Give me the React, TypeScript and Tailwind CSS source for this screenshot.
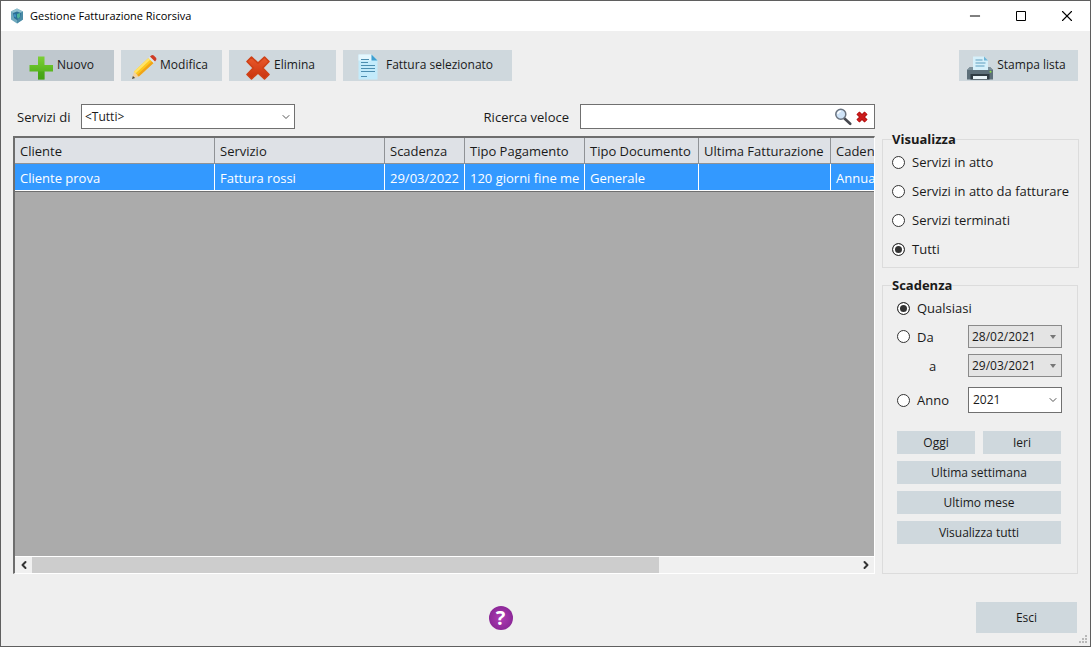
import { useState, type ReactNode } from "react";
import { ChevronDown, ChevronLeft, ChevronRight, Minus, Square, X } from "lucide-react";

const columns = [
  { label: "Cliente", width: "w-[200px]", value: "Cliente prova" },
  { label: "Servizio", width: "w-[170px]", value: "Fattura rossi" },
  { label: "Scadenza", width: "w-[80px]", value: "29/03/2022" },
  { label: "Tipo Pagamento", width: "w-[120px]", value: "120 giorni fine me" },
  { label: "Tipo Documento", width: "w-[114px]", value: "Generale" },
  { label: "Ultima Fatturazione", width: "w-[132px]", value: "" },
  { label: "Cadenza", width: "w-[320px]", value: "Annuale" },
];

const views = ["Servizi in atto", "Servizi in atto da fatturare", "Servizi terminati", "Tutti"];

function AppLogo() {
  return (
    <svg viewBox="0 0 16 16" className="size-4" aria-hidden="true">
      <path d="M8 0.5 14 3.5v8L8 15.5 2 11.5v-8z" fill="#6fa9bd" />
      <path d="M8 0.5 14 3.5 8 7 2 3.5z" fill="#8fc0cf" />
      <path d="M8 7v8.5l6-4v-8z" fill="#4b8ba6" />
      <path d="M4 5l4-1.500 4 1.500-1 5-3 2-3-2z" fill="#2a6f96" />
      <path d="M8 6l3-1v4l-2 2-1-2z" fill="#4fb39a" />
      <path d="M5 6l2 0.500v3l-2-1z" fill="#3f93c4" />
    </svg>
  );
}

function PlusIcon() {
  return (
    <svg viewBox="0 0 24 24" className="size-6" aria-hidden="true">
      <defs>
        <linearGradient id="plus" x1="0" y1="0" x2="0" y2="1">
          <stop offset="0" stopColor="#7ccf35" />
          <stop offset="1" stopColor="#46a814" />
        </linearGradient>
      </defs>
      <path d="M9 0.500h6.500v8.500H24v6.500h-8.500v8H9v-8H0.500V9H9z" fill="url(#plus)" />
      <path d="M9 15.500h6.500v8H9z" fill="#3f9d12" opacity="0.5" />
    </svg>
  );
}

function PencilIcon() {
  return (
    <svg viewBox="0 0 26 26" className="size-[26px]" aria-hidden="true">
      <path d="M1 25l2-7.500 4.800 5z" fill="#f3d2a0" />
      <path d="M1 25l0.900-3 2.200 2z" fill="#444" />
      <path d="M3 17.500L17.500 4l5 5L7.800 22.500z" fill="#fcc81e" />
      <path d="M3 17.500L17.500 4l1.700 1.700L4.700 19.200z" fill="#ffe36a" />
      <path d="M6.200 20.900L20.800 7.300l1.700 1.700L7.800 22.500z" fill="#f0a31a" />
      <path d="M17.500 4l1.500-1.400 5 5L22.500 9z" fill="#dfe5e8" />
      <path d="M19 2.600l1.200-1.100q1.300-1 2.600 0l2.200 2.200q1 1.200 0 2.500L24 7.600z" fill="#cf3a24" />
    </svg>
  );
}

function DeleteIcon() {
  return (
    <svg viewBox="0 0 24 24" className="size-6" aria-hidden="true">
      <defs>
        <linearGradient id="cross" x1="0" y1="0" x2="0" y2="1">
          <stop offset="0" stopColor="#ea5a2c" />
          <stop offset="1" stopColor="#c8320e" />
        </linearGradient>
      </defs>
      <path
        d="M5.500 1 12 7.200 18.500 1 23 5.500 16.800 12 23 18.500 18.500 23 12 16.800 5.500 23 1 18.500 7.200 12 1 5.500z"
        fill="url(#cross)"
        stroke="#cf4015"
        strokeWidth="1.600"
        strokeLinejoin="round"
      />
    </svg>
  );
}

function DocumentIcon() {
  return (
    <svg viewBox="0 0 20 26" className="h-[26px] w-5" aria-hidden="true">
      <path d="M0.500 0.500h13l6 6v19h-19z" fill="#c3ebfb" />
      <path d="M0.500 0.500h13v6H0.500z" fill="#e4f7fe" />
      <path d="M13.500 0.500l6 6h-6z" fill="#3f9fd0" />
      <path d="M3 5.500h8M3 8.500h7M3 11.500h14M3 14.500h14M3 17.500h14M3 22.500h6" stroke="#4c8eb0" strokeWidth="1.200" />
    </svg>
  );
}

function PrinterIcon() {
  return (
    <svg viewBox="0 0 26 24" className="h-6 w-[26px]" aria-hidden="true">
      <path d="M3 11h20l3 3v9.500H0V14z" fill="#5d6f79" />
      <path d="M3 11h20l3 3H0z" fill="#7d909a" />
      <path d="M6 0.500h11l4 4V14H6z" fill="#d6f0fa" />
      <path d="M17 0.500l4 4h-4z" fill="#6fb5d6" />
      <path d="M8.500 4h7M8.500 7h10M8.500 10h9" stroke="#5f9dbd" strokeWidth="1.100" />
      <path d="M3.500 18h19v5.500h-19z" fill="#2f3b42" />
      <path d="M6 20h14v3H6z" fill="#e9f3f7" />
      <circle cx="23.500" cy="15.800" r="1" fill="#8ddb4a" />
    </svg>
  );
}

function SearchIcon() {
  return (
    <svg viewBox="0 0 18 18" className="size-[18px]" aria-hidden="true">
      <path d="M10.500 10.500l5.700 5.300" stroke="#46484f" strokeWidth="2.600" strokeLinecap="round" />
      <circle cx="6.800" cy="6.300" r="5" fill="#cfe3f7" stroke="#69727e" strokeWidth="1.500" />
      <path d="M3.800 6a3 3 0 0 1 3-2.700" stroke="#fff" strokeWidth="1.300" fill="none" />
    </svg>
  );
}

function ClearIcon() {
  return (
    <svg viewBox="0 0 14 14" className="size-3.5" aria-hidden="true">
      <path d="M3 3l8 8M11 3l-8 8" stroke="#a80f0f" strokeWidth="4.500" />
      <path d="M3 3l8 8M11 3l-8 8" stroke="#cc1c1c" strokeWidth="2.800" />
    </svg>
  );
}

function ToolButton({ icon, children, className }: { icon: ReactNode; children: ReactNode; className: string }) {
  return (
    <button type="button" className={`flex h-[31px] items-end justify-center pr-1 pb-px ${className}`}>
      {icon}
      <span className="self-center">{children}</span>
    </button>
  );
}

function SmallButton({ children }: { children: ReactNode }) {
  return (
    <button type="button" className="h-[23px] w-full bg-[#cfd8dd] text-xs">
      {children}
    </button>
  );
}

function Radio({ name, label, checked, onChange }: { name: string; label: string; checked: boolean; onChange: () => void }) {
  return (
    <label className="flex items-center gap-[7px] whitespace-nowrap">
      <input
        type="radio"
        name={name}
        checked={checked}
        onChange={onChange}
        className="size-[13px] shrink-0 appearance-none rounded-full border border-[#333] bg-white checked:bg-[#333] checked:shadow-[inset_0_0_0_2px_white]"
      />
      {label}
    </label>
  );
}

function DateField({ label, value }: { label: string; value: string }) {
  return (
    <div className="flex h-[23px] items-center border border-[#8a8a8a] bg-[#e4e4e4] pl-[3px] pr-1">
      <input type="text" aria-label={label} defaultValue={value} className="w-full min-w-0 bg-transparent text-xs outline-none" />
      <svg viewBox="0 0 8 4" className="h-1 w-2 shrink-0" aria-hidden="true">
        <path d="M1 0h6L4 4z" fill="#777" />
      </svg>
    </div>
  );
}

export default function App() {
  const [view, setView] = useState("Tutti");
  const [due, setDue] = useState("Qualsiasi");

  return (
    <div className="flex min-h-screen flex-col border border-[#5f5f5f] bg-[#efefef] font-['Open_Sans','Noto_Sans',sans-serif] text-[13px] leading-5 text-[#1a1a1a]">
      <header className="flex h-[30px] items-center bg-white pl-2">
        <AppLogo />
        <h1 className="ml-[5px] flex-1 text-[11px] text-black">Gestione Fatturazione Ricorsiva</h1>
        <button type="button" aria-label="Riduci" className="flex h-full w-[46px] items-center justify-center">
          <Minus className="size-4 text-black" strokeWidth={1.5} />
        </button>
        <button type="button" aria-label="Ingrandisci" className="flex h-full w-[46px] items-center justify-center">
          <svg viewBox="0 0 10 10" className="size-2.5" aria-hidden="true">
            <path d="M0.500 0.500h9v9h-9z" fill="none" stroke="#000" />
          </svg>
        </button>
        <button type="button" aria-label="Chiudi" className="flex h-full w-[46px] items-center justify-center">
          <X className="size-[18px] text-black" strokeWidth={1.5} />
        </button>
      </header>

      <main className="flex flex-1 flex-col px-3 pt-[19px]">
        <div className="flex gap-[7px] text-xs">
          <ToolButton icon={<PlusIcon />} className="w-[101px] gap-1 bg-[#bfc8ce]">Nuovo</ToolButton>
          <ToolButton icon={<PencilIcon />} className="w-[101px] gap-[3px] bg-[#cfd8dd]">Modifica</ToolButton>
          <ToolButton icon={<DeleteIcon />} className="w-[107px] gap-1 bg-[#cfd8dd]">Elimina</ToolButton>
          <ToolButton icon={<DocumentIcon />} className="w-[169px] gap-2 bg-[#cfd8dd]">Fattura selezionato</ToolButton>
          <ToolButton icon={<PrinterIcon />} className="ml-auto w-[119px] gap-1 bg-[#cfd8dd]">Stampa lista</ToolButton>
        </div>

        <div className="mt-[23px] flex flex-1 gap-[7px]">
          <section className="flex min-w-0 flex-1 flex-col">
            <div className="flex items-center pl-1">
              <label htmlFor="servizi" className="w-16">Servizi di</label>
              <div className="relative w-[214px]">
                <select id="servizi" className="h-[25px] w-full appearance-none border border-[#707070] bg-white pl-[3px] text-xs outline-none">
                  <option>&lt;Tutti&gt;</option>
                </select>
                <ChevronDown className="pointer-events-none absolute right-[3px] top-[7px] size-3 text-[#555]" strokeWidth={2} />
              </div>
              <label htmlFor="ricerca" className="ml-auto mr-[11px]">Ricerca veloce</label>
              <div className="flex h-[25px] w-[295px] items-center border border-[#707070] bg-white pr-[5px]">
                <input id="ricerca" type="text" className="w-full min-w-0 bg-transparent px-1 outline-none" />
                <button type="button" aria-label="Cerca" className="mr-[3px] shrink-0"><SearchIcon /></button>
                <button type="button" aria-label="Cancella ricerca" className="shrink-0"><ClearIcon /></button>
              </div>
            </div>

            <div className="mt-[7px] flex min-h-0 flex-1 flex-col border-l-2 border-t-2 border-r border-b border-l-[#6e6e6e] border-t-[#6e6e6e] border-r-white border-b-white bg-[#ababab]">
              <div className="flex-1 overflow-hidden">
                <table className="w-[1136px] table-fixed border-separate border-spacing-0 text-left">
                  <thead>
                    <tr className="h-[26px] bg-[#dee1e6]">
                      {columns.map((c) => (
                        <th key={c.label} scope="col" className={`${c.width} overflow-hidden whitespace-nowrap border-b border-r border-[#8f9296] pl-[5px] font-normal`}>
                          {c.label}
                        </th>
                      ))}
                    </tr>
                  </thead>
                  <tbody>
                    <tr className="h-[27px] bg-[#3399ff] text-white">
                      {columns.map((c) => (
                        <td key={c.label} className="overflow-hidden whitespace-nowrap border-b border-r border-white pt-0.5 pl-[5px]">
                          {c.value}
                        </td>
                      ))}
                    </tr>
                  </tbody>
                </table>
                <div className="h-px bg-[#6e6e6e]" />
              </div>
              <div className="flex h-[17px] items-center border-t border-white bg-[#f0f0f0]">
                <button type="button" aria-label="Scorri a sinistra" className="flex w-[17px] shrink-0 justify-center">
                  <ChevronLeft className="size-3 text-[#333]" strokeWidth={4} />
                </button>
                <div className="h-full flex-1">
                  <div className="h-full w-[76%] bg-[#cdcdcd]" />
                </div>
                <button type="button" aria-label="Scorri a destra" className="flex w-[17px] shrink-0 justify-center">
                  <ChevronRight className="size-3 text-[#333]" strokeWidth={4} />
                </button>
              </div>
            </div>
          </section>

          <aside className="flex w-[196px] shrink-0 flex-col pt-[25px]">
            <fieldset className="border border-[#dcdcdc] px-[9px] pb-2">
              <legend className="font-bold">Visualizza</legend>
              <div className="flex flex-col gap-[9px] pt-[3px]">
                {views.map((v) => (
                  <Radio key={v} name="visualizza" label={v} checked={view === v} onChange={() => setView(v)} />
                ))}
              </div>
            </fieldset>

            <fieldset className="mt-[7px] flex-1 border border-[#dcdcdc] px-[9px]">
              <legend className="font-bold">Scadenza</legend>
              <div className="grid grid-cols-[71px_1fr] items-center gap-y-[6px] pl-[5px] pr-[6px] pt-[3px]">
                <div className="col-span-2 pb-px">
                  <Radio name="scadenza" label="Qualsiasi" checked={due === "Qualsiasi"} onChange={() => setDue("Qualsiasi")} />
                </div>
                <Radio name="scadenza" label="Da" checked={due === "Da"} onChange={() => setDue("Da")} />
                <DateField label="Da" value="28/02/2021" />
                <span className="pl-8">a</span>
                <DateField label="a" value="29/03/2021" />
              </div>
              <div className="mt-[10px] grid grid-cols-[71px_1fr] items-center pl-[5px] pr-[6px]">
                <Radio name="scadenza" label="Anno" checked={due === "Anno"} onChange={() => setDue("Anno")} />
                <div className="relative">
                  <select aria-label="Anno" className="h-[26px] w-full appearance-none border border-[#707070] bg-white pl-1 pb-px text-xs outline-none">
                    <option>2021</option>
                  </select>
                  <ChevronDown className="pointer-events-none absolute right-[3px] top-[7px] size-3 text-[#555]" strokeWidth={2} />
                </div>
              </div>
              <div className="mt-[18px] flex flex-col gap-[7px] pl-[5px] pr-[7px]">
                <div className="flex gap-2">
                  <SmallButton>Oggi</SmallButton>
                  <SmallButton>Ieri</SmallButton>
                </div>
                <SmallButton>Ultima settimana</SmallButton>
                <SmallButton>Ultimo mese</SmallButton>
                <SmallButton>Visualizza tutti</SmallButton>
              </div>
            </fieldset>
          </aside>
        </div>
      </main>

      <footer className="relative mt-7 flex items-center pb-[13px] pl-6 pr-[13px]">
        <div className="flex flex-1 justify-center">
          <button
            type="button"
            aria-label="Aiuto"
            className="size-6 rounded-full bg-radial from-[#b03cb4] to-[#7d1f8c] text-xl font-bold leading-6 text-white"
          >
            ?
          </button>
        </div>
        <button type="button" className="h-[31px] w-[101px] bg-[#cfd8dd] text-xs">Esci</button>
        <svg viewBox="0 0 10 10" className="absolute bottom-[2px] right-[2px] size-2.5" aria-hidden="true">
          <path d="M7 1h2v2H7zM7 4h2v2H7zM4 4h2v2H4zM7 7h2v2H7zM4 7h2v2H4zM1 7h2v2H1z" fill="#b9b9b9" />
        </svg>
      </footer>
    </div>
  );
}
